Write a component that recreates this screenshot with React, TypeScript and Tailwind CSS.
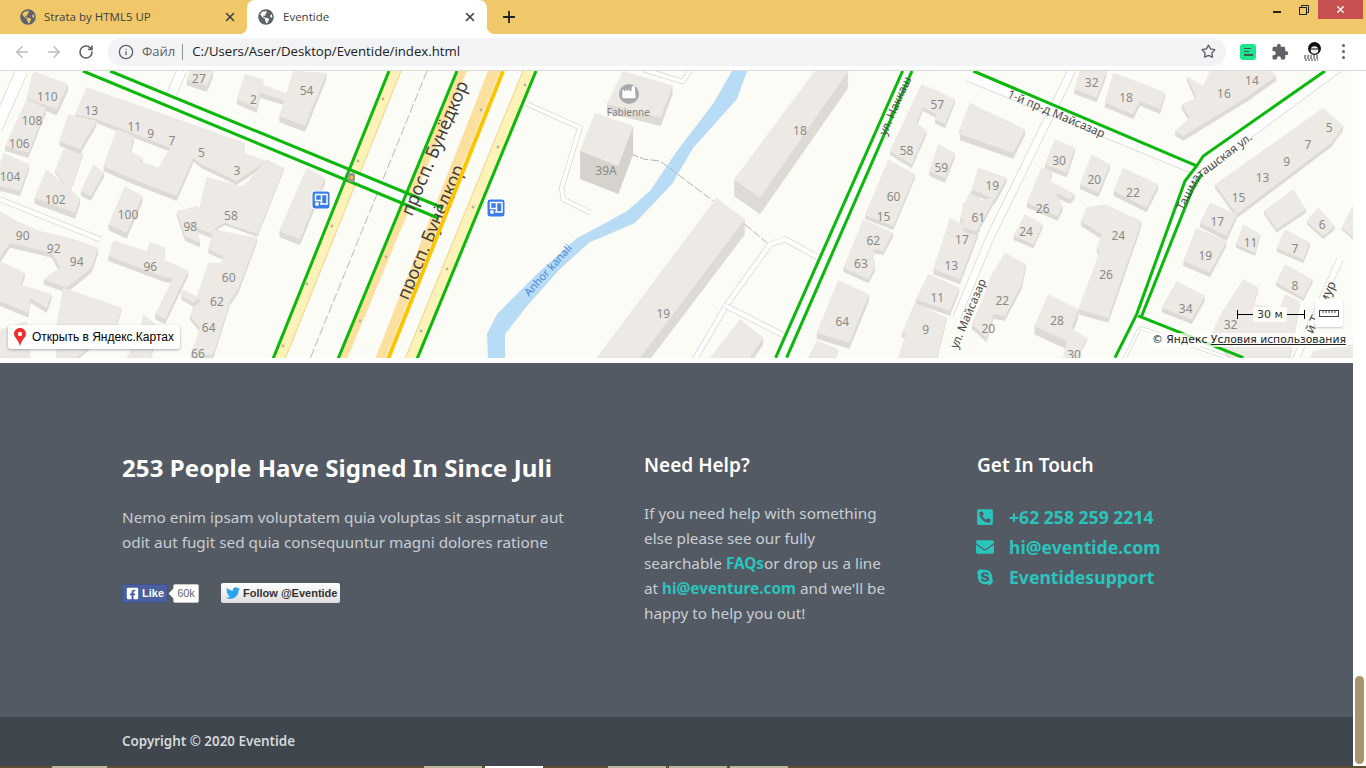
import React from "react";
import { FaGlobeAmericas, FaFacebookSquare, FaTwitter, FaPhoneSquareAlt, FaEnvelope, FaSkype } from "react-icons/fa";
import { MdExtension } from "react-icons/md";
import { ArrowLeft, ArrowRight, RotateCw, Info, Star, X, Plus } from "lucide-react";

const B = ({ p, h = 36, c = "#edeae6", s = "#dedbd6" }: { p: number[]; h?: number; c?: string; s?: string }) => {
  const pts = p.join(" ");
  const n = Math.ceil(h / 3);
  return (
    <g>
      {Array.from({ length: n }, (_, i) => (
        <polygon key={i} points={pts} fill={s} transform={`translate(0 ${h - i * 3})`} />
      ))}
      <polygon points={pts} fill={c} />
    </g>
  );
};

const N = ({ x, y, t }: { x: number; y: number; t: string }) => (
  <text x={x} y={y} fontSize={36} fill="#8b8986" textAnchor="middle" dominantBaseline="central">{t}</text>
);

const R = ({ d, w = 16 }: { d: string; w?: number }) => (
  <g fill="none" strokeLinejoin="round">
    <path d={d} stroke="#c8c8c4" strokeWidth={w + 3} />
    <path d={d} stroke="#ffffff" strokeWidth={w} />
  </g>
);

const G = ({ x1, y1, x2, y2 }: { x1: number; y1: number; x2: number; y2: number }) => (
  <line x1={x1} y1={y1} x2={x2} y2={y2} stroke="#0bb80b" strokeWidth={3} />
);

const Bus = ({ x, y }: { x: number; y: number }) => (
  <g transform={`translate(${x} ${y})`}>
    <rect x={-9} y={-9} width={18} height={18} rx={3} fill="#3a7de6" stroke="#ffffff" strokeWidth={1} />
    <path d="M-6 -5.5H6V4H-1M-5.5 -5.5V0.5H0.5M0.5 -5.5V4" fill="none" stroke="#ffffff" strokeWidth={1.5} />
    <circle cx={-4} cy={4} r={1.9} fill="#ffffff" />
  </g>
);

const MapDrawing = () => (
  <svg viewBox="0 70 1353 288" width={1353} height={288} className="block font-['Noto_Sans']">
    <rect x={0} y={70} width={1353} height={288} fill="#fcfcf7" />

    {/* river */}
    <polygon
      fill="#b8dcf5"
      points="732,70 713,103 677,150 650,190 627,210 600,225 577,237 537,273 497,313 487,333 488,358 505,358 505,333 527,305 560,268 590,241 600,237 635,222 672,183 693,147 737,98 747,70"
    />

    {/* zoom-3 block */}
    <g transform="translate(0 70) scale(0.3333)">
      <R d="M65 0L-10 170" w={34} />
      <R d="M545 0L515 70" w={28} />
      <R d="M0 385L300 505" w={14} />
      <B p={[100, 0, 205, 40, 170, 115, 80, 80]} h={18} />
      <B p={[80, 85, 138, 112, 85, 245, 15, 225]} h={15} />
      <B p={[10, 245, 88, 280, 60, 360, 0, 345, 0, 280]} h={15} />
      <B p={[190, 235, 250, 245, 210, 360, 165, 300]} h={6} />
      <B p={[260, 48, 735, 215, 735, 245, 800, 270, 710, 330, 605, 280, 580, 260, 505, 228, 290, 145, 225, 130]} h={12} />
      <B p={[205, 130, 290, 150, 240, 235, 178, 210]} h={15} />
      <B p={[140, 295, 240, 380, 225, 425, 103, 380]} h={18} />
      <B p={[350, 175, 402, 195, 390, 240, 430, 262, 420, 270, 475, 290, 510, 230, 580, 260, 530, 375, 400, 325, 310, 285]} h={15} />
      <B p={[280, 280, 312, 305, 272, 375, 243, 360]} h={14} />
      <B p={[375, 345, 428, 375, 380, 485, 325, 460]} h={18} />
      <B p={[620, 318, 725, 345, 745, 330, 800, 265, 852, 290, 772, 490, 675, 455, 640, 475, 590, 440, 600, 405]} h={8} />
      <B p={[530, 420, 590, 405, 645, 470, 640, 490, 590, 470, 600, 510, 598, 515, 555, 495]} h={14} />
      <B p={[640, 475, 772, 500, 715, 655, 690, 690, 640, 850, 570, 860, 600, 770, 570, 735, 625, 575, 665, 575, 670, 555, 625, 535]} h={12} />
      <B p={[340, 508, 440, 540, 450, 512, 495, 530, 490, 565, 565, 600, 495, 745, 465, 730, 520, 620, 500, 620, 325, 555]} h={15} />
      <B p={[545, 655, 600, 680, 580, 695, 545, 675]} h={12} />
      <B p={[0, 420, 50, 450, 120, 480, 210, 500, 295, 530, 275, 590, 200, 650, 130, 625, 180, 590, 155, 545, 30, 515, 0, 560]} h={15} />
      <B p={[0, 570, 75, 605, 60, 640, 155, 670, 140, 710, 90, 680, 85, 725, 0, 690]} h={15} />
      <B p={[190, 650, 365, 710, 350, 760, 230, 860, 170, 860, 170, 760]} h={8} />
      <B p={[0, 775, 80, 750, 90, 860, 0, 860]} h={8} />
      <B p={[430, 730, 480, 770, 450, 860, 380, 860, 420, 790]} h={8} />
      <B p={[920, 290, 975, 320, 900, 505, 838, 480]} h={18} />
      <B p={[570, 0, 640, 0, 620, 45, 560, 25]} h={18} />
      <B p={[735, 10, 790, 25, 770, 110, 710, 85]} h={15} />
      <B p={[785, 40, 870, 70, 860, 90, 780, 65]} h={15} />
      <B p={[880, 0, 980, 5, 915, 165, 838, 135]} h={18} />
      <N x={142} y={78} t="110" /><N x={96} y={150} t="108" /><N x={58} y={218} t="106" /><N x={30} y={317} t="104" />
      <N x={274} y={120} t="13" /><N x={403} y={167} t="11" /><N x={452} y={188} t="9" /><N x={516} y={210} t="7" />
      <N x={604} y={245} t="5" /><N x={711} y={298} t="3" /><N x={166} y={386} t="102" /><N x={384} y={430} t="100" />
      <N x={693} y={433} t="58" /><N x={571} y={467} t="98" /><N x={68} y={494} t="90" /><N x={161} y={534} t="92" />
      <N x={230} y={571} t="94" /><N x={451} y={587} t="96" /><N x={686} y={620} t="60" /><N x={651} y={692} t="62" />
      <N x={626} y={769} t="64" /><N x={594} y={848} t="66" /><N x={920} y={58} t="54" /><N x={760} y={85} t="2" /><N x={597} y={21} t="27" />
    </g>

    {/* yellow road strips */}
    <polygon points="389,70 401,70 285,358 273,358" fill="#fdf3b8" />
    <polygon points="458,70 467,70 347,358 338,358" fill="#fde09f" />
    <polygon points="488,70 500,70 385,358 375,358" fill="#fde09f" />
    <polygon points="523,70 535,70 417,358 405,358" fill="#fdf3b8" />
    <line x1={401} y1={70} x2={285} y2={358} stroke="#f6d184" strokeWidth={1} />
    <line x1={523} y1={70} x2={405} y2={358} stroke="#f6d184" strokeWidth={1} />
    <line x1={427} y1={70} x2={310} y2={358} stroke="#b9b9b5" strokeWidth={1} strokeDasharray="9 3" />

    {/* crossing */}
    <polygon points="110,70 83,70 438,217 443,207" fill="#ffffff" />
    <G x1={110} y1={70} x2={443} y2={207} />
    <G x1={83} y1={70} x2={438} y2={217} />
    <G x1={389} y1={70} x2={273} y2={358} />
    <G x1={457} y1={70} x2={338} y2={358} />
    <G x1={536} y1={70} x2={417} y2={358} />
    <rect x={348} y={172} width={7} height={9} rx={2} fill="#9a9686" />
    <circle cx={351.5} cy={176.5} r={1.8} fill="#e7c23a" />
    {[[383, 98], [358, 160], [332, 225], [307, 283], [283, 345]].map(([x, y]) => (
      <circle key={x} cx={x} cy={y} r={1.4} fill="#b8b39a" />
    ))}
    {[[481, 109], [386, 256], [360, 320], [473, 206], [447, 268], [421, 330], [498, 146], [525, 84]].map(([x, y]) => (
      <circle key={x} cx={x} cy={y} r={1.4} fill="#b8b39a" />
    ))}

    {/* zoom-5 block */}
    <g transform="translate(600 70) scale(0.3333)">
      <R d="M270 0L248 32L130 -5" w={12} />
      <R d="M-219 99L-60 170L-115 350L-110 385L-30 425" w={12} />
      <path d="M0 215L135 265L180 270L340 390M435 460L500 515" fill="none" stroke="#b5b5b1" strokeWidth={3} strokeDasharray="26 6" />
      <R d="M655 560L555 505L510 520L378 705L282 870" w={14} />
      <R d="M378 705L555 795" w={14} />
      <polygon points="905,0 935,0 560,860 525,860" fill="#ffffff" />
      <B p={[70, 0, 218, 45, 182, 140, 20, 100]} h={25} />
      <B p={[-15, 125, 100, 165, 55, 285, -60, 240]} h={84} s="#d6d3ce" />
      <B p={[645, 0, 745, 0, 480, 380, 402, 325]} h={50} />
      <B p={[350, 380, 435, 445, 120, 860, -10, 860]} h={45} />
      <B p={[965, 38, 1065, 85, 1035, 160, 1005, 145, 1010, 130, 968, 108, 950, 155, 980, 180, 935, 280, 870, 240]} h={12} />
      <B p={[1015, 220, 1065, 245, 1035, 320, 988, 300]} h={15} />
      <B p={[865, 265, 945, 310, 880, 465, 795, 432]} h={12} />
      <B p={[790, 445, 880, 485, 850, 540, 820, 535, 825, 590, 805, 625, 730, 590]} h={12} />
      <B p={[715, 628, 808, 670, 748, 815, 650, 785]} h={18} />
      <B p={[650, 808, 715, 835, 705, 860, 625, 860]} h={6} />
      <B p={[1050, 440, 1135, 480, 1080, 625, 1000, 595]} h={15} />
      <B p={[985, 608, 1078, 650, 1050, 720, 948, 685]} h={14} />
      <B p={[945, 695, 1040, 740, 1010, 860, 895, 860, 918, 790, 905, 790]} h={10} />
      <B p={[420, 745, 490, 800, 450, 860, 330, 860]} h={20} />
      <B p={[1110, 360, 1140, 370, 1140, 470, 1080, 440]} h={14} />
      <B p={[1110, 95, 1140, 110, 1140, 205, 1078, 175]} h={14} />
      <line x1={908} y1={0} x2={527} y2={860} stroke="#0bb80b" strokeWidth={9} />
      <line x1={936} y1={0} x2={560} y2={860} stroke="#0bb80b" strokeWidth={9} />
      <circle cx={87} cy={69} r={30} fill="#a6aaae" />
      <path d="M67 82V55L76 62V55L85 62V55L94 62L96 45H104L107 82Z" fill="#ffffff" />
      <text x={85} y={124} fontSize={30} fill="#7f8488" textAnchor="middle" dominantBaseline="central">Fabienne</text>
      <N x={18} y={298} t="39A" /><N x={600} y={178} t="18" /><N x={190} y={729} t="19" /><N x={1012} y={101} t="57" />
      <N x={920} y={239} t="58" /><N x={1024} y={289} t="59" /><N x={881} y={378} t="60" /><N x={851} y={438} t="15" />
      <N x={820} y={508} t="62" /><N x={783} y={577} t="63" /><N x={727} y={752} t="64" /><N x={1086} y={507} t="17" />
      <N x={1054} y={583} t="13" /><N x={1012} y={681} t="11" /><N x={977} y={777} t="9" /><N x={1130} y={440} t="61" />
      <text fontSize={35} fill="#4a4a4a" textAnchor="start" transform="translate(858 195) rotate(-66)">ул. Наккаш</text>
      <text fontSize={35} fill="#4a4a4a" transform="translate(1072 835) rotate(-67)">ул. Майсазар</text>
    </g>

    {/* zoom-6 block */}
    <g transform="translate(970 70) scale(0.3333)">
      <R d="M305 0L60 500L-40 740" w={22} />
      <polygon points="10,0 -30,0 -10,30 660,305 680,285" fill="#ffffff" />
      <line x1={-10} y1={30} x2={660} y2={305} stroke="#c8c8c4" strokeWidth={2} />
      <polygon points="1065,0 700,255 695,310 1115,0" fill="#ffffff" />
      <polygon points="680,285 645,330 500,730 430,860 470,860 515,735 665,360 695,310" fill="#ffffff" />
      <line x1={1115} y1={0} x2={695} y2={310} stroke="#c8c8c4" strokeWidth={2} />
      <R d="M1110 565L975 870" w={18} />
      <R d="M510 770L460 870" w={8} />
      <R d="M510 770L800 870" w={8} />
      <B p={[0, 95, 165, 175, 130, 245, -30, 190]} h={18} />
      <B p={[25, 290, 110, 320, 75, 385, 5, 355]} h={14} />
      <B p={[-20, 395, 75, 380, 20, 480, -20, 470]} h={12} />
      <B p={[255, 205, 315, 230, 290, 305, 225, 280]} h={14} />
      <B p={[215, 290, 245, 300, 240, 330, 315, 370, 300, 385, 255, 365, 278, 405, 262, 435, 170, 395]} h={14} />
      <B p={[365, 250, 420, 280, 385, 365, 330, 340]} h={14} />
      <B p={[460, 290, 565, 340, 530, 410, 430, 360]} h={14} />
      <B p={[165, 430, 218, 460, 190, 520, 130, 495]} h={12} />
      <B p={[405, 400, 515, 450, 415, 740, 325, 715, 390, 540, 380, 530, 395, 490, 333, 450, 350, 408]} h={15} />
      <B p={[235, 670, 325, 715, 290, 810, 193, 765]} h={25} />
      <B p={[105, 545, 167, 580, 155, 640, 105, 735, 70, 730, 50, 800, 5, 760, 40, 680, 60, 620]} h={14} />
      <B p={[300, 770, 352, 800, 320, 860, 280, 860]} h={8} />
      <B p={[330, 0, 410, 0, 380, 80, 313, 55]} h={14} />
      <B p={[430, 5, 525, 40, 585, 65, 570, 115, 510, 90, 490, 130, 405, 95]} h={14} />
      <B p={[650, 15, 700, 45, 720, 0, 905, 0, 920, 15, 835, 75, 640, 195, 615, 180, 660, 140, 635, 100, 680, 80]} h={14} />
      <B p={[735, 340, 1060, 110, 1120, 165, 1085, 215, 800, 430]} h={12} />
      <B p={[720, 395, 800, 430, 770, 495, 690, 455]} h={14} />
      <B p={[680, 470, 770, 510, 720, 605, 640, 570]} h={14} />
      <B p={[820, 460, 870, 490, 855, 545, 798, 520]} h={10} />
      <B p={[945, 475, 1020, 515, 1000, 565, 920, 530]} h={12} />
      <B p={[1045, 410, 1095, 465, 1060, 495, 1010, 450]} h={10} />
      <B p={[970, 355, 1008, 415, 920, 475, 882, 420]} h={10} />
      <B p={[945, 580, 1028, 625, 1000, 680, 918, 635]} h={10} />
      <B p={[620, 630, 705, 675, 665, 745, 575, 710]} h={14} />
      <B p={[820, 625, 865, 650, 850, 700, 930, 710, 945, 670, 990, 690, 960, 860, 780, 860, 725, 790, 755, 725]} h={8} />
      <B p={[1145, 410, 1150, 405, 1150, 500, 1115, 470]} h={6} />
      <B p={[1030, 840, 1150, 820, 1150, 860, 1020, 860]} h={4} />
      <polyline points="10,0 680,285" fill="none" stroke="#0bb80b" strokeWidth={9} />
      <polyline points="1065,0 700,255 680,285 645,330 500,730 435,860" fill="none" stroke="#0bb80b" strokeWidth={9} />
      <polyline points="695,310 665,360 515,735" fill="none" stroke="#0bb80b" strokeWidth={9} />
      <polyline points="505,735 820,860" fill="none" stroke="#0bb80b" strokeWidth={9} />
      <N x={365} y={36} t="32" /><N x={468} y={81} t="18" /><N x={762} y={69} t="16" /><N x={846} y={29} t="14" />
      <N x={1078} y={171} t="5" /><N x={1014} y={222} t="7" /><N x={950} y={272} t="9" /><N x={878} y={321} t="13" />
      <N x={806} y={379} t="15" /><N x={742} y={453} t="17" /><N x={706} y={553} t="19" /><N x={842} y={515} t="11" />
      <N x={975} y={532} t="7" /><N x={1057} y={462} t="6" /><N x={975} y={644} t="8" /><N x={647} y={712} t="34" />
      <N x={782} y={762} t="32" /><N x={67} y={344} t="19" /><N x={25} y={440} t="61" /><N x={267} y={270} t="30" />
      <N x={373} y={327} t="20" /><N x={489} y={366} t="22" /><N x={218} y={412} t="26" /><N x={168} y={483} t="24" />
      <N x={445} y={495} t="24" /><N x={408} y={610} t="26" /><N x={97} y={690} t="22" /><N x={55} y={773} t="20" />
      <N x={261} y={750} t="28" /><N x={312} y={852} t="30" />
      <text fontSize={35} fill="#4a4a4a" transform="translate(110 78) rotate(23)">1-й пр-д Майсазар</text>
      <text fontSize={35} fill="#4a4a4a" transform="translate(640 420) rotate(-63)">Ташма</text>
      <text fontSize={35} fill="#4a4a4a" transform="translate(692 322) rotate(-37)">ташская ул.</text>
      <text fontSize={38} fill="#4a4a4a" transform="translate(1028 790) rotate(-65)">й Тисмур</text>
    </g>

    {/* labels over the avenue */}
    <text fontSize={18} fill="#3d3d3d" transform="translate(412 216) rotate(-67)">просп. Бунёдкор</text>
    <text fontSize={18} fill="#3d3d3d" transform="translate(408 300) rotate(-67)">просп. Бунёдкор</text>
    <line x1={503} y1={70} x2={388} y2={358} stroke="#ffc400" strokeWidth={4} />
    <text fontSize={11} fill="#4c86d8" transform="translate(529 296) rotate(-48)">Anhor kanali</text>
    <Bus x={321} y={199} />
    <Bus x={496} y={207} />
  </svg>
);

const Tab = ({ title, active }: { title: string; active?: boolean }) => (
  <div className={`relative flex items-center h-[34px] rounded-t-[8px] pr-[10px] ${active ? "w-[240px] bg-white pl-[11px]" : "w-[247px] pl-[20px]"}`}>
    <FaGlobeAmericas className="w-[16px] h-[16px] text-[#5f6368] shrink-0" />
    <span className={`text-[11.5px] text-[#3c4043] font-['Open_Sans'] flex-1 ${active ? "ml-[9px]" : "ml-[8px]"}`}>{title}</span>
    <X className="w-[14px] h-[14px] text-[#3c4043]" strokeWidth={2.6} />
    {active && (
      <>
        <span className="absolute -left-[8px] bottom-0 w-[8px] h-[8px] bg-[radial-gradient(circle_at_0_0,transparent_8px,white_8.5px)]" />
        <span className="absolute -right-[8px] bottom-0 w-[8px] h-[8px] bg-[radial-gradient(circle_at_100%_0,transparent_8px,white_8.5px)]" />
      </>
    )}
  </div>
);

const Avatar = () => (
  <svg viewBox="0 0 20 20" className="w-[20px] h-[20px]">
    <circle cx={11.5} cy={6.5} r={6.5} fill="#111" />
    <circle cx={11.5} cy={8} r={3.8} fill="#f1efe9" />
    <path d="M8 7h7" stroke="#111" strokeWidth={1} />
    <path d="M1 14h15M1 16h14M2 18h13" stroke="#777" strokeWidth={1.3} strokeDasharray="2 1" />
  </svg>
);

const Contact = ({ icon, text }: { icon: React.ReactNode; text: string }) => (
  <div className="flex items-center h-[30px]">
    <span className="w-[33px] text-[#2bc4bd] text-[18px]">{icon}</span>
    <span className="text-[#2bc4bd] font-bold text-[17.6px]">{text}</span>
  </div>
);

export default function App() {
  return (
    <div className="w-[1366px] h-[768px] overflow-hidden flex flex-col bg-white font-['Noto_Sans',sans-serif]">
      {/* tab strip */}
      <div className="h-[34px] bg-[#f0c869] flex items-end relative shrink-0">
        <div className="flex">
          <Tab title="Strata by HTML5 UP" />
          <Tab title="Eventide" active />
        </div>
        <Plus className="ml-[13px] mb-[8px] w-[18px] h-[18px] text-[#202124]" strokeWidth={2.4} />
        <div className="ml-auto flex self-start items-start">
          <span className="w-[8px] h-[2px] mt-[11px] bg-[#222] mr-[18px]" />
          <svg viewBox="0 0 10 10" className="w-[10px] h-[10px] mt-[5px] mr-[9px]" fill="none" stroke="#222" strokeWidth={1}>
            <rect x={0.5} y={2.5} width={7} height={7} />
            <path d="M2.5 2.5V0.5H9.5V7.5H7.5" />
          </svg>
          <div className="w-[45px] h-[19px] bg-[#c75050] flex items-center justify-center mr-[3px]">
            <X className="w-[11px] h-[11px] text-white" strokeWidth={3} />
          </div>
        </div>
      </div>

      {/* toolbar */}
      <div className="h-[37px] bg-white border-b border-[#d9d9d9] flex items-center shrink-0 relative pb-[1px]">
        <div className="flex w-[108px] pl-[13px] gap-[14px]">
          <ArrowLeft className="w-[18px] h-[18px] text-[#b9bbbe]" strokeWidth={2} />
          <ArrowRight className="w-[18px] h-[18px] text-[#b9bbbe]" strokeWidth={2} />
          <RotateCw className="w-[16px] h-[16px] mt-[1px] ml-[1px] text-[#5f6368]" strokeWidth={2.4} />
        </div>
        <div className="w-[1118px] h-[28px] rounded-full bg-[#f1f3f4] flex items-center pl-[10px] pr-[10px]">
          <Info className="w-[16px] h-[16px] text-[#5f6368]" strokeWidth={2} />
          <span className="ml-[8px] text-[13px] text-[#5f6368] font-['Open_Sans']">Файл</span>
          <span className="ml-[7px] w-px h-[16px] bg-[#8f9295]" />
          <span className="ml-[9px] text-[13.2px] text-[#202124] font-['Open_Sans'] flex-1">C:/Users/Aser/Desktop/Eventide/index.html</span>
          <Star className="w-[15px] h-[15px] text-[#5f6368]" strokeWidth={2.2} />
        </div>
        <div className="ml-[14px] w-[16px] h-[16px] rounded-[3px] bg-[#1be58f] flex flex-col items-start justify-center gap-[2px] pl-[4px]">
          <span className="w-[7px] h-[1px] bg-[#3d5f4f]" />
          <span className="w-[5px] h-[1px] bg-[#3d5f4f]" />
          <span className="w-[9px] h-[2px] bg-[#3d5f4f]" />
        </div>
        <MdExtension className="ml-[15px] w-[18px] h-[18px] text-[#5f6368]" />
        <div className="ml-[14px]"><Avatar /></div>
        <div className="ml-[19px] flex flex-col gap-[3px]">
          <span className="w-[3px] h-[3px] rounded-full bg-[#5f6368]" />
          <span className="w-[3px] h-[3px] rounded-full bg-[#5f6368]" />
          <span className="w-[3px] h-[3px] rounded-full bg-[#5f6368]" />
        </div>
      </div>

      {/* page + scrollbar */}
      <div className="flex flex-1 min-h-0">
        <div className="w-[1353px] flex flex-col">
          <div className="relative h-[287px] overflow-hidden shrink-0">
            <MapDrawing />
            <div className="absolute left-[8px] top-[254px] h-[24px] w-[172px] bg-white rounded-[3px] shadow-[0_1px_3px_rgba(0,0,0,0.3)] flex items-center pl-[6px] font-['Liberation_Sans'] text-[12px] text-black">
              <svg viewBox="0 0 12 18" className="w-[12px] h-[18px] mr-[6px]">
                <path d="M6 0C2.7 0 0 2.6 0 5.8C0 9.5 4 11 6 18C8 11 12 9.5 12 5.8C12 2.6 9.3 0 6 0Z" fill="#f02c2c" />
                <circle cx={6} cy={6} r={2.2} fill="#fff" />
              </svg>
              Открыть в Яндекс.Картах
            </div>
            <div className="absolute left-[1237px] top-[243px] w-[68px] h-0 border-t border-black">
              <span className="absolute left-0 -top-[5px] w-px h-[9px] bg-black" />
              <span className="absolute right-0 -top-[5px] w-px h-[9px] bg-black" />
              <span className="absolute left-[16px] -top-[8px] w-[34px] h-[15px] bg-[#fcfcf7] text-center text-[11px] leading-[15px] text-[#333] font-['DejaVu_Sans']">30 м</span>
            </div>
            <div className="absolute left-[1315px] top-[228px] w-[28px] h-[28px] bg-white rounded-[3px] shadow-[0_1px_2px_rgba(0,0,0,0.2)] flex items-center justify-center">
              <svg viewBox="0 0 20 7" className="w-[20px] h-[7px]" fill="none" stroke="#444" strokeWidth={1}>
                <rect x={0.5} y={0.5} width={19} height={6} />
                <path d="M4 1V3M7 1V3M10 1V3M13 1V3M16 1V3" />
              </svg>
            </div>
            <div className="absolute left-[1149px] top-[262px] h-[14px] w-[198px] bg-[rgba(255,255,255,0.75)] flex items-center pl-[3px] text-[10.8px] text-[#222] font-['DejaVu_Sans'] whitespace-nowrap">
              © Яндекс&nbsp;<span className="underline">Условия использования</span>
            </div>
          </div>
          <div className="h-[5px] bg-white shrink-0" />

          {/* footer */}
          <div className="h-[354px] bg-[#535a64] flex pl-[122px] pt-[88px] shrink-0">
            <div className="w-[522px]">
              <h2 className="text-[24px] leading-[34px] font-bold text-white whitespace-nowrap tracking-[0.1px]">253 People Have Signed In Since Juli</h2>
              <p className="mt-[20px] text-[15.3px] leading-[25px] text-[#c9ced3] whitespace-nowrap">
                Nemo enim ipsam voluptatem quia voluptas sit asprnatur aut
                <br />
                odit aut fugit sed quia consequuntur magni dolores ratione
              </p>
              <div className="mt-[28px] flex items-center font-['Liberation_Sans']">
                <div className="w-[46px] h-[19px] bg-[#4a5f9e] border border-[#3f5391] rounded-[2px] flex items-center pl-[3px] text-white text-[11px] font-bold">
                  <FaFacebookSquare className="w-[13px] h-[13px] mr-[3px]" />
                  Like
                </div>
                <div className="relative ml-[5px] w-[26px] h-[19px] bg-white border border-[#c8c8c8] rounded-[2px] text-[11px] leading-[17px] text-center text-[#666]">
                  60k
                  <span className="absolute -left-[4px] top-[5px] w-[7px] h-[7px] bg-white rotate-45" />
                </div>
                <div className="ml-[22px] w-[119px] h-[20px] rounded-[2px] bg-[linear-gradient(#ffffff,#dedede)] flex items-center pl-[5px] text-[11px] font-bold text-[#333] whitespace-nowrap">
                  <FaTwitter className="w-[14px] h-[14px] text-[#2aa3ef] mr-[3px]" />
                  Follow @Eventide
                </div>
              </div>
            </div>
            <div className="w-[333px]">
              <h3 className="text-[19px] leading-[28px] font-semibold text-white">Need Help?</h3>
              <p className="mt-[22px] text-[15.3px] leading-[25px] text-[#c9ced3] whitespace-nowrap">
                If you need help with something
                <br />
                else please see our fully
                <br />
                searchable <span className="font-bold text-[#2bc4bd]">FAQs</span>or drop us a line
                <br />
                at <span className="font-bold text-[#2bc4bd]">hi@eventure.com</span> and we'll be
                <br />
                happy to help you out!
              </p>
            </div>
            <div>
              <h3 className="text-[19px] leading-[28px] font-semibold text-white">Get In Touch</h3>
              <div className="mt-[23px] -ml-[1px]">
                <Contact icon={<FaPhoneSquareAlt />} text="+62 258 259 2214" />
                <Contact icon={<FaEnvelope />} text="hi@eventide.com" />
                <Contact icon={<FaSkype />} text="Eventidesupport" />
              </div>
            </div>
          </div>

          <div className="h-[49px] bg-[#3f464e] pl-[122px] flex items-center text-[13.4px] font-semibold text-[#d5d8da] shrink-0">
            Copyright © 2020 Eventide
          </div>
        </div>
        <div className="flex-1 pl-[2px] pt-[605px]">
          <div className="w-[9px] h-[88px] rounded-full bg-[#a8956d]" />
        </div>
      </div>

      {/* window behind */}
      <div className="h-[2px] bg-[#5f5030] shrink-0 flex">
        <span className="ml-[52px] w-[55px] bg-[#bdb69f]" />
        <span className="ml-[317px] w-[58px] bg-[#bdb69f]" />
        <span className="ml-[3px] w-[58px] bg-white" />
        <span className="ml-[65px] w-[58px] bg-[#bdb69f]" />
        <span className="ml-[3px] w-[58px] bg-[#bdb69f]" />
        <span className="ml-[3px] w-[58px] bg-[#bdb69f]" />
      </div>
    </div>
  );
}
